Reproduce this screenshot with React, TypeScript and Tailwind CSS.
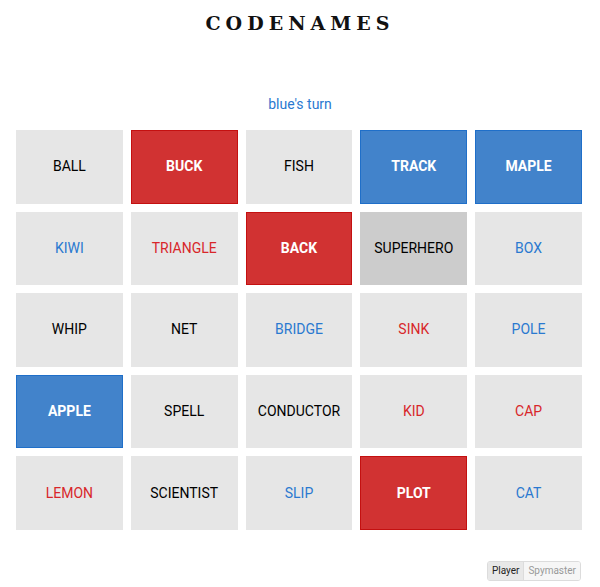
type Kind = 'neutral' | 'red' | 'blue' | 'assassin'

interface Card {
  word: string
  kind: Kind
  revealed: boolean
}

const cards: Card[] = [
  { word: 'BALL', kind: 'neutral', revealed: false },
  { word: 'BUCK', kind: 'red', revealed: true },
  { word: 'FISH', kind: 'neutral', revealed: false },
  { word: 'TRACK', kind: 'blue', revealed: true },
  { word: 'MAPLE', kind: 'blue', revealed: true },
  { word: 'KIWI', kind: 'blue', revealed: false },
  { word: 'TRIANGLE', kind: 'red', revealed: false },
  { word: 'BACK', kind: 'red', revealed: true },
  { word: 'SUPERHERO', kind: 'neutral', revealed: true },
  { word: 'BOX', kind: 'blue', revealed: false },
  { word: 'WHIP', kind: 'neutral', revealed: false },
  { word: 'NET', kind: 'neutral', revealed: false },
  { word: 'BRIDGE', kind: 'blue', revealed: false },
  { word: 'SINK', kind: 'red', revealed: false },
  { word: 'POLE', kind: 'blue', revealed: false },
  { word: 'APPLE', kind: 'blue', revealed: true },
  { word: 'SPELL', kind: 'neutral', revealed: false },
  { word: 'CONDUCTOR', kind: 'neutral', revealed: false },
  { word: 'KID', kind: 'red', revealed: false },
  { word: 'CAP', kind: 'red', revealed: false },
  { word: 'LEMON', kind: 'red', revealed: false },
  { word: 'SCIENTIST', kind: 'neutral', revealed: false },
  { word: 'SLIP', kind: 'blue', revealed: false },
  { word: 'PLOT', kind: 'red', revealed: true },
  { word: 'CAT', kind: 'blue', revealed: false },
]

function cardClass(c: Card) {
  if (c.revealed) {
    if (c.kind === 'red') return 'bg-[#d13232] border-[#c41010] text-white font-bold'
    if (c.kind === 'blue') return 'bg-[#4283cb] border-[#1f6fc9] text-white font-bold'
    return 'bg-[#cccccc] border-[#cccccc] text-black'
  }
  if (c.kind === 'red') return 'bg-[#e6e6e6] border-[#e6e6e6] text-[#d8262a]'
  if (c.kind === 'blue') return 'bg-[#e6e6e6] border-[#e6e6e6] text-[#2a79d0]'
  return 'bg-[#e6e6e6] border-[#e6e6e6] text-black'
}

export default function App() {
  return (
    <div className="w-[600px] h-[587px] bg-white font-['Roboto',sans-serif] relative">
      <h1 className="pt-[12px] text-center font-['DejaVu_Serif',serif] font-bold text-[19px] leading-[22px] tracking-[5px] text-[#111]">
        CODENAMES
      </h1>
      <div className="mt-[62px] text-center text-[14px] leading-[16px] text-[#2a79d0]">blue's turn</div>
      <div className="ml-4 mt-[18px] w-[566px] grid grid-cols-5 auto-rows-[73.6px] gap-2">
        {cards.map((c) => (
          <div
            key={c.word}
            className={`flex items-center justify-center border text-[14px] ${cardClass(c)}`}
          >
            {c.word}
          </div>
        ))}
      </div>
      <div className="absolute right-[19px] bottom-[6px] flex border border-[#dcdcdc] rounded-[3px] overflow-hidden text-[10px] leading-[18px]">
        <span className="px-[4px] bg-[#e8e8e8] text-[#222]">Player</span>
        <span className="px-[4px] bg-[#f6f6f6] text-[#999] border-l border-[#dcdcdc]">Spymaster</span>
      </div>
    </div>
  )
}
